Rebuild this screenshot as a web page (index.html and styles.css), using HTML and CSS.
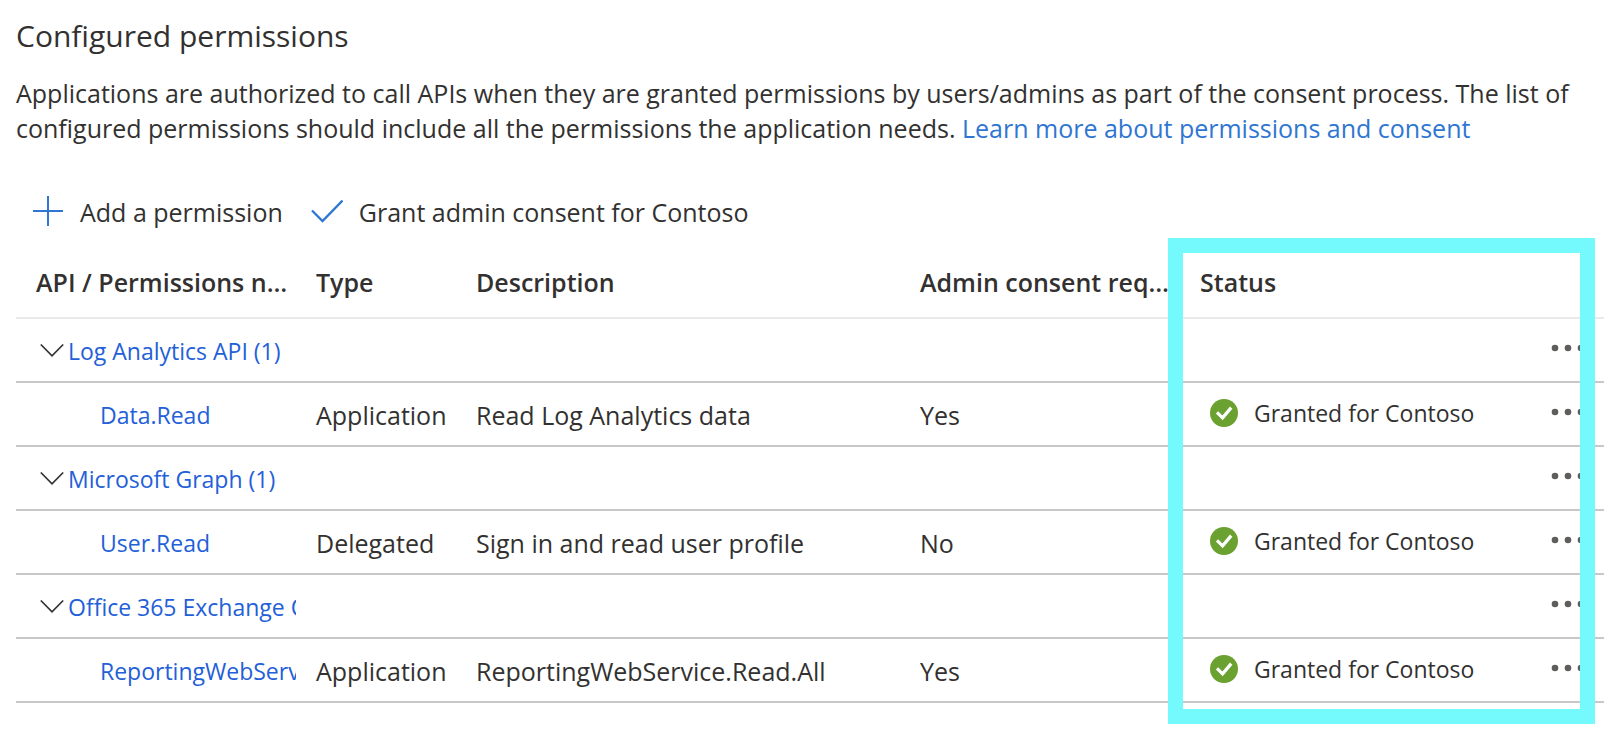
FILE: index.html
```html
<!DOCTYPE html>
<html lang="en">
<head>
<meta charset="utf-8">
<title>Configured permissions</title>
<link rel="stylesheet" href="styles.css">
</head>
<body>
<svg class="sprite" aria-hidden="true">
  <symbol id="chevron" viewBox="0 0 24 14"><path d="M.8 .5 12 11.900 23.200 .5" fill="none" stroke="#323130" stroke-width="1.6"/></symbol>
  <symbol id="granted" viewBox="0 0 28 28"><circle cx="14" cy="14" r="14" fill="#6ba131"/><path d="M7 13.400 12.600 18.900 21.200 8.600" fill="none" stroke="#fff" stroke-width="3.200"/></symbol>
  <symbol id="dots" viewBox="0 0 34 8"><g fill="#605e5c"><circle cx="4" cy="4" r="3.3"/><circle cx="17" cy="4" r="3.3"/><circle cx="30" cy="4" r="3.3"/></g></symbol>
</svg>
<main class="page">
  <h1 class="title">Configured permissions</h1>
  <p class="intro">Applications are authorized to call APIs when they are granted permissions by users/admins as part of the consent process. The list of configured permissions should include all the permissions the application needs. <a class="learn" href="#">Learn more about permissions and consent</a></p>
  <div class="toolbar">
    <button class="command" type="button"><svg class="command-icon" viewBox="0 0 32 32" aria-hidden="true"><path d="M16 0V30M1 15H31" fill="none" stroke="#2f76d2" stroke-width="2"/></svg>Add a permission</button>
    <button class="command" type="button"><svg class="command-icon" viewBox="0 0 32 32" aria-hidden="true"><path d="M1 14.500 11.500 25 31.500 4.500" fill="none" stroke="#2f76d2" stroke-width="2.300"/></svg>Grant admin consent for Contoso</button>
  </div>
  <div class="grid">
    <table class="permissions">
      <colgroup><col class="col-name"><col class="col-type"><col><col class="col-admin"><col class="col-status"><col class="col-more"></colgroup>
      <thead>
        <tr><th>API / Permissions name</th><th>Type</th><th>Description</th><th>Admin consent required</th><th>Status</th><th></th></tr>
      </thead>
      <tbody>
        <tr>
          <td class="name"><div class="group"><button class="toggle" type="button" aria-label="Collapse"><svg class="chevron"><use href="#chevron"/></svg></button><a href="#">Log Analytics API (1)</a></div></td>
          <td></td><td></td><td></td><td></td>
          <td class="more"><button class="menu" type="button" aria-label="More"><svg class="dots"><use href="#dots"/></svg></button></td>
        </tr>
        <tr>
          <td class="name child"><a href="#">Data.Read</a></td>
          <td>Application</td><td>Read Log Analytics data</td><td>Yes</td>
          <td class="status"><div class="granted"><svg class="badge"><use href="#granted"/></svg>Granted for Contoso</div></td>
          <td class="more"><button class="menu" type="button" aria-label="More"><svg class="dots"><use href="#dots"/></svg></button></td>
        </tr>
        <tr>
          <td class="name"><div class="group"><button class="toggle" type="button" aria-label="Collapse"><svg class="chevron"><use href="#chevron"/></svg></button><a href="#">Microsoft Graph (1)</a></div></td>
          <td></td><td></td><td></td><td></td>
          <td class="more"><button class="menu" type="button" aria-label="More"><svg class="dots"><use href="#dots"/></svg></button></td>
        </tr>
        <tr>
          <td class="name child"><a href="#">User.Read</a></td>
          <td>Delegated</td><td>Sign in and read user profile</td><td>No</td>
          <td class="status"><div class="granted"><svg class="badge"><use href="#granted"/></svg>Granted for Contoso</div></td>
          <td class="more"><button class="menu" type="button" aria-label="More"><svg class="dots"><use href="#dots"/></svg></button></td>
        </tr>
        <tr>
          <td class="name"><div class="group"><button class="toggle" type="button" aria-label="Collapse"><svg class="chevron"><use href="#chevron"/></svg></button><a href="#">Office 365 Exchange Online (1)</a></div></td>
          <td></td><td></td><td></td><td></td>
          <td class="more"><button class="menu" type="button" aria-label="More"><svg class="dots"><use href="#dots"/></svg></button></td>
        </tr>
        <tr>
          <td class="name child"><a href="#">ReportingWebService.Read.All</a></td>
          <td>Application</td><td>ReportingWebService.Read.All</td><td>Yes</td>
          <td class="status"><div class="granted"><svg class="badge"><use href="#granted"/></svg>Granted for Contoso</div></td>
          <td class="more"><button class="menu" type="button" aria-label="More"><svg class="dots"><use href="#dots"/></svg></button></td>
        </tr>
      </tbody>
    </table>
    <div class="highlight"></div>
  </div>
</main>
</body>
</html>
```
FILE: styles.css
```css
* { box-sizing: border-box; }
body {
  margin: 0;
  background: #fff;
  color: #323130;
  font-family: "Open Sans", "Noto Sans", sans-serif;
  font-size: 25px;
}
a { color: #2360d8; text-decoration: none; }
button {
  margin: 0;
  padding: 0;
  border: 0;
  background: none;
  color: inherit;
  font: inherit;
}
svg { display: block; flex: none; }
.sprite { position: absolute; width: 0; height: 0; }
.page { padding: 16px 8px 28px 16px; }
.title { margin: 0; font-size: 30px; font-weight: 400; line-height: 40px; }
.intro { margin: 20px 24px 0 0; line-height: 35px; }
.learn { color: #2f76d2; }
.toolbar { display: flex; gap: 28px; margin-top: 46px; padding-left: 16px; }
.command { display: flex; align-items: center; gap: 16px; line-height: 40px; }
.command-icon { width: 32px; height: 32px; }
.grid { position: relative; margin-top: 17px; }
.permissions { width: 100%; table-layout: fixed; border-collapse: separate; border-spacing: 0; }
.col-name, .col-admin { width: 280px; }
.col-type { width: 160px; }
.col-status { width: 360px; }
.col-more { width: 64px; }
th, td {
  height: 64px;
  padding: 0 0 0 20px;
  border-bottom: 2px solid #c8c8c8;
  text-align: left;
  white-space: nowrap;
  overflow: hidden;
}
th {
  height: 70px;
  padding: 0 8px 2px 20px;
  border-bottom-color: #eaeaea;
  font-weight: 600;
  text-overflow: ellipsis;
}
td { padding-top: 2px; }
.name { font-size: 23px; }
.child { padding-left: 84px; }
.group { display: flex; align-items: center; }
.toggle { padding: 0 4px; }
.chevron { width: 24px; height: 14px; }
.status { padding: 0 0 2px 30px; font-size: 23px; }
.granted { display: flex; align-items: center; gap: 16px; }
.badge { width: 28px; height: 28px; }
.more { padding: 0 0 4px 11px; }
.menu { display: block; }
.dots { width: 34px; height: 8px; }
.highlight {
  position: absolute;
  top: -11px;
  right: 9px;
  bottom: -21px;
  width: 427px;
  border: 15px solid #74f9fd;
  pointer-events: none;
}
```
